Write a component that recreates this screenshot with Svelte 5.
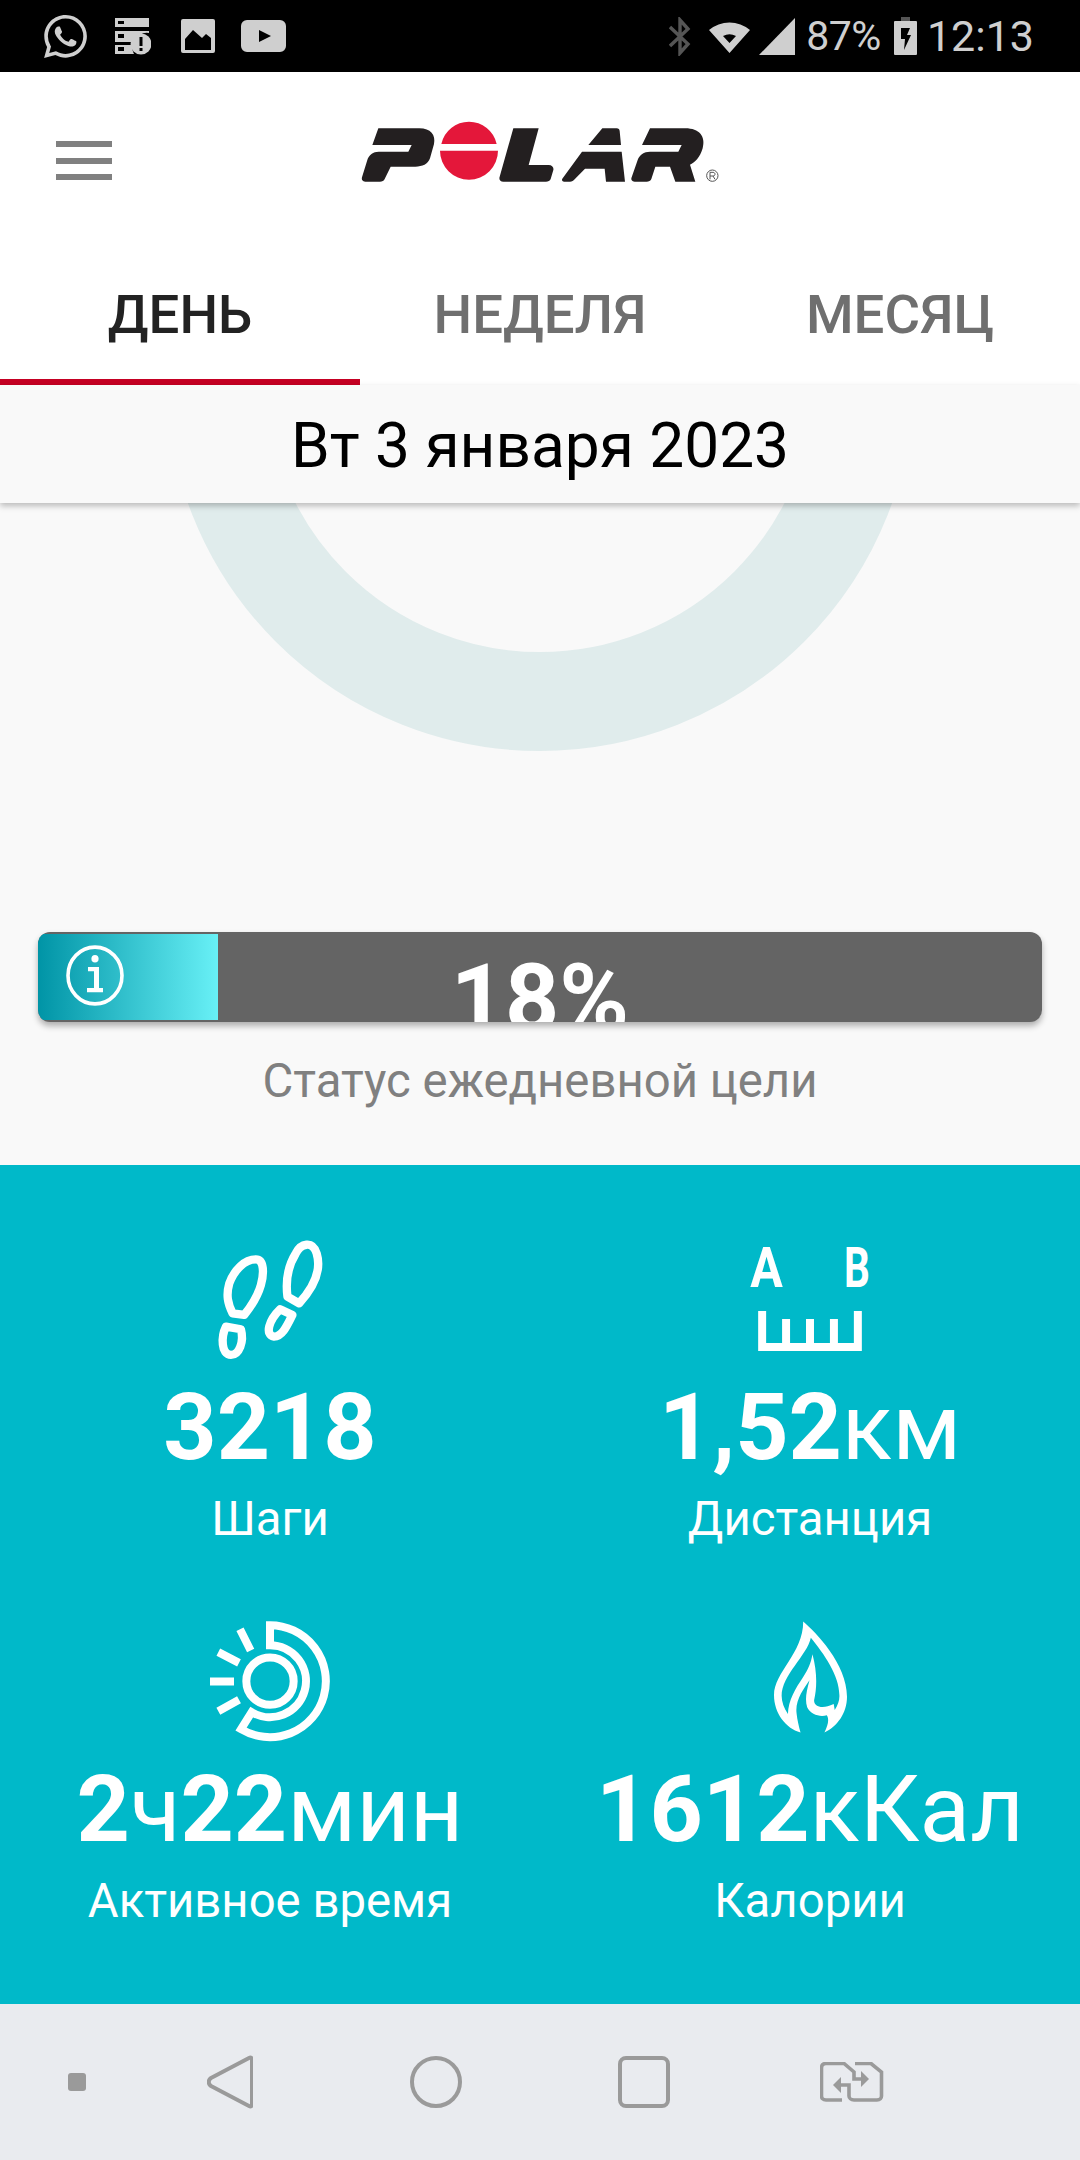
<script>
  let tabs = ['ДЕНЬ', 'НЕДЕЛЯ', 'МЕСЯЦ'];
  let active = 0;
  let percent = 18;
</script>

<div class="screen">
  <div class="status">
    <div class="status-left">
      <svg class="wa" viewBox="2 2 20 20"><path fill="#cfcfcf" d="M12.04 2c-5.46 0-9.91 4.45-9.91 9.91 0 1.75.46 3.45 1.32 4.95L2.05 22l5.25-1.38c1.45.79 3.08 1.21 4.74 1.21 5.46 0 9.91-4.45 9.91-9.91 0-2.65-1.03-5.14-2.9-7.01A9.816 9.816 0 0 0 12.04 2m.01 1.67c2.2 0 4.26.86 5.82 2.42a8.225 8.225 0 0 1 2.41 5.83c0 4.54-3.7 8.23-8.24 8.23-1.48 0-2.93-.39-4.19-1.15l-.3-.17-3.12.82.83-3.04-.2-.32a8.188 8.188 0 0 1-1.26-4.38c.01-4.54 3.7-8.24 8.25-8.24M8.53 7.33c-.16 0-.43.06-.66.31-.22.25-.87.86-.87 2.07 0 1.22.89 2.39 1 2.56.14.17 1.76 2.67 4.25 3.73.59.27 1.05.42 1.41.53.59.19 1.13.16 1.56.1.48-.07 1.46-.6 1.67-1.18.21-.58.21-1.07.15-1.18-.07-.1-.23-.16-.48-.27-.25-.14-1.47-.74-1.69-.82-.23-.08-.37-.12-.56.12-.16.25-.64.81-.78.97-.15.17-.29.19-.53.07-.26-.13-1.06-.39-2-1.23-.74-.66-1.23-1.47-1.38-1.72-.12-.24-.01-.39.11-.5.11-.11.27-.29.37-.44.13-.14.17-.25.25-.41.08-.17.04-.31-.02-.43-.06-.11-.56-1.35-.77-1.84-.2-.48-.4-.42-.56-.43-.14 0-.3-.01-.47-.01z"/></svg>
      <svg class="srv" viewBox="0 0 36 37">
        <path fill="#cfcfcf" fill-rule="evenodd" d="M0 0H34V9H0ZM3 3V6H9V3ZM0 13H34V15A12 12 0 0 0 20 24H0ZM3 16V20H9V16ZM0 27H18A12 12 0 0 0 19 36H0ZM3 29V33H9V29Z"/>
        <circle cx="26" cy="26" r="10.5" fill="#cfcfcf"/>
        <rect x="24.5" y="19" width="3" height="9" fill="#000"/>
        <rect x="24.5" y="30" width="3" height="3" fill="#000"/>
      </svg>
      <svg class="pic" viewBox="0 0 34 34">
        <path fill="#cfcfcf" fill-rule="evenodd" d="M2 0H32A2 2 0 0 1 34 2V32A2 2 0 0 1 32 34H2A2 2 0 0 1 0 32V2A2 2 0 0 1 2 0ZM4 31H30V19L25 15 21 19 12 11 4 20Z"/>
      </svg>
      <svg class="yt" viewBox="0 0 45 32">
        <path fill="#cfcfcf" fill-rule="evenodd" d="M6 0H39A6 6 0 0 1 45 6V26A6 6 0 0 1 39 32H6A6 6 0 0 1 0 26V6A6 6 0 0 1 6 0ZM18 10V22L30 16Z"/>
      </svg>
    </div>
    <div class="status-right">
      <svg class="bt" viewBox="0 0 22 39"><path fill="none" stroke="#555" stroke-width="3.4" d="M1 10 19 27 11 36V3L19 12 1 29"/></svg>
      <svg class="wifi" viewBox="0 0 41 33">
        <path fill="#cfcfcf" fill-rule="evenodd" d="M0 10A32 32 0 0 1 41 10L20.5 33ZM14 16 20.5 23 27 16A14 14 0 0 0 14 16Z"/>
      </svg>
      <svg class="signal" viewBox="0 0 36 37"><path fill="#cfcfcf" d="M36 0V37H0Z"/></svg>
      <span class="st-text pct">87%</span>
      <svg class="batt" viewBox="0 0 23 38">
        <path fill="#555" d="M7 0H16V4H7Z"/>
        <path fill="#cfcfcf" fill-rule="evenodd" d="M1 4H22A1 1 0 0 1 23 5V37A1 1 0 0 1 22 38H1A1 1 0 0 1 0 37V5A1 1 0 0 1 1 4ZM7 11H16L13 18H17L10 33 11 22H7Z"/>
      </svg>
      <span class="st-text clock">12:13</span>
    </div>
  </div>

  <header class="topbar">
    <div class="burger"><span></span><span></span><span></span></div>
    <svg class="logo" viewBox="0 0 1200 270">
      <path fill="#231f20" d="M115 55H238C272 55 288 75 282 102L270 145C264 163 247 170 226 170H152L134 207C132 213 126 215 120 215H76C68 215 64 209 66 202L82 150C86 135 100 125 116 125H205L215 105H97Z"/>
      <path fill="#e4173a" d="M304 102A85 85 0 0 1 470 102ZM300 122H474A87 87 0 1 1 300 122Z"/>
      <path fill="#231f20" d="M520 55H596L566 165H626C636 165 642 172 640 180L632 207C630 213 624 215 618 215H490C481 215 476 208 479 200Z"/>
      <path fill="#231f20" d="M787 55H830C836 55 838 58 839 63L843 105H745ZM726 125H845L855 215H798L794 176H735L704 208C700 213 696 215 690 215H672C666 215 664 209 668 205Z"/>
      <path fill="#231f20" d="M930 55H1036C1078 55 1098 80 1088 115C1080 143 1064 158 1050 164L1066 215H1006L990 170H946L934 207C932 213 926 215 920 215H884C876 215 872 209 875 202L893 150C898 135 912 125 930 125H1015L1025 105H906Z"/>
      <circle cx="1117" cy="197" r="17" fill="none" stroke="#555" stroke-width="3"/>
      <path fill="none" stroke="#555" stroke-width="3" d="M1110 208V187H1119C1127 187 1127 198 1119 198H1110M1119 198 1125 208"/>
    </svg>
  </header>

  <nav class="tabs">
    {#each tabs as t, i}
      <div class="tab" class:active={i === active}>{t}</div>
    {/each}
  </nav>

  <div class="date">Вт 3 января 2023</div>

  <section class="goal">
    <div class="ring-wrap">
      <svg class="ring" viewBox="0 0 1080 248">
        <circle cx="540" cy="-126" r="324.5" fill="none" stroke="#e0ecec" stroke-width="99"/>
      </svg>
    </div>
    <div class="bar">
      <div class="bar-fill" style="width: {percent * 0.995}%">
        <svg class="info" viewBox="0 0 58 58" preserveAspectRatio="none">
          <circle cx="29" cy="29" r="27" fill="none" stroke="#fff" stroke-width="3.6"/>
          <circle cx="29" cy="13" r="3.6" fill="#fff"/>
          <path fill="#fff" d="M22 21H33V41H37V45H21V41H28V25H22Z"/>
        </svg>
      </div>
      <div class="bar-value">{percent}%</div>
    </div>
    <div class="goal-label">Статус ежедневной цели</div>
  </section>

  <section class="stats">
    <div class="stat">
      <div class="icon">
        <svg class="i-steps" viewBox="108 84 322 366">
          <g fill="none" stroke="#fff" stroke-width="25" stroke-linejoin="round">
            <path d="M155 310C140 280 135 255 145 220 160 180 190 148 225 148 250 148 250 190 240 225 230 260 210 290 190 315Z"/>
            <path d="M135 350 180 358C190 395 175 435 150 435 120 435 120 380 135 350Z"/>
            <path d="M320 260C315 220 320 170 345 130 360 100 395 90 408 130 420 170 410 220 355 280Z"/>
            <path d="M298 298 335 315C320 345 305 380 280 380 250 375 265 330 298 298Z"/>
          </g>
        </svg>
      </div>
      <div class="value">3218</div>
      <div class="label">Шаги</div>
    </div>
    <div class="stat">
      <div class="icon">
        <svg class="i-dist" viewBox="90 70 360 322">
          <text x="90" y="200" class="ab" textLength="98" lengthAdjust="spacingAndGlyphs">A</text>
          <text x="372" y="200" class="ab" textLength="78" lengthAdjust="spacingAndGlyphs">B</text>
          <path fill="none" stroke="#fff" stroke-width="24" d="M126 272V380H414V272M198 296V380M270 296V380M342 296V380"/>
        </svg>
      </div>
      <div class="value">1,52<span class="unit">км</span></div>
      <div class="label">Дистанция</div>
    </div>
    <div class="stat">
      <div class="icon">
        <svg class="i-active" viewBox="90 62 360 362">
          <g fill="none" stroke="#fff" stroke-width="24">
            <circle cx="270" cy="242" r="71"/>
            <path d="M270 74A168 168 0 1 1 183 386L215 335A108 108 0 1 0 270 134Z"/>
            <path d="M90 243H162M115 155 177 187M180 86 212 150M115 332 177 298"/>
          </g>
        </svg>
      </div>
      <div class="value">2<span class="unit">ч</span>22<span class="unit">мин</span></div>
      <div class="label">Активное время</div>
    </div>
    <div class="stat">
      <div class="icon">
        <svg class="i-flame" viewBox="125 63 220 335">
          <path fill="#fff" fill-rule="evenodd" d="M213 63C250 95 345 190 345 290 345 340 315 380 277 398 288 375 292 358 284 346 265 352 235 345 225 322 218 300 222 275 232 240 215 265 188 300 193 340 195 360 200 380 205 398 160 385 125 340 125 285 125 215 213 160 213 63ZM236 112C225 165 148 225 148 287 148 305 155 325 167 342 168 300 190 265 212 232 228 208 236 190 241 162 255 215 255 260 246 300 244 318 268 330 305 312L308 330C318 315 323 300 322 285 322 225 275 160 236 112Z"/>
        </svg>
      </div>
      <div class="value">1612<span class="unit">кКал</span></div>
      <div class="label">Калории</div>
    </div>
  </section>

  <footer class="navbar">
    <span class="dot"></span>
    <svg class="n-back" viewBox="0 0 46 54"><path fill="none" stroke="#9a9a9a" stroke-width="4" stroke-linejoin="round" d="M42 3C44 2 45 3 45 5V49C45 51 44 52 42 51L4 31C1 29 1 25 4 23Z"/></svg>
    <svg class="n-home" viewBox="0 0 52 52"><circle cx="26" cy="26" r="24" fill="none" stroke="#9a9a9a" stroke-width="4"/></svg>
    <svg class="n-recent" viewBox="0 0 52 52"><rect x="2" y="2" width="48" height="48" rx="6" fill="none" stroke="#9a9a9a" stroke-width="4"/></svg>
    <svg class="n-swap" viewBox="0 0 64 40">
      <g fill="none" stroke="#9a9a9a" stroke-width="3.6">
        <path d="M22 38H6C3 38 1.500 36 1.500 34V6C1.500 3 3 1.500 6 1.500H24L34 10V17H44"/>
        <path d="M35 1.500H51L61.500 10V34C61.500 36 60 38 57 38H34C31 38 29 36 29 34V23H18"/>
      </g>
      <path fill="#9a9a9a" d="M41 9 49 17 41 25ZM21 15 13 23 21 31Z"/>
    </svg>
  </footer>
</div>

<style>
  :global(body) {
    margin: 0;
    background: #000;
  }
  .screen {
    width: 1080px;
    height: 2160px;
    display: flex;
    flex-direction: column;
    overflow: hidden;
    font-family: Roboto, "Noto Sans", sans-serif;
    background: #fff;
  }
  svg { display: block; }

  .status {
    height: 72px;
    flex: none;
    background: #000;
    display: flex;
    align-items: center;
    justify-content: space-between;
    padding: 0 46px 0 44px;
    box-sizing: border-box;
  }
  .status-left, .status-right { display: flex; align-items: center; }
  .wa { width: 43px; height: 43px; margin-right: 28px; }
  .srv { width: 36px; height: 37px; margin-right: 30px; }
  .pic { width: 34px; height: 34px; margin-right: 26px; }
  .yt { width: 45px; height: 32px; }
  .bt { width: 22px; height: 39px; margin-right: 18px; }
  .wifi { width: 41px; height: 33px; margin-right: 9px; }
  .signal { width: 36px; height: 37px; margin-right: 11px; }
  .st-text { color: #cfcfcf; font-size: 41px; line-height: 72px; }
  .clock { font-size: 43px; }
  .pct { margin-right: 13px; letter-spacing: -0.5px; }
  .batt { width: 23px; height: 38px; margin-right: 10px; }

  .topbar {
    flex: none;
    height: 168px;
    display: grid;
    grid-template-columns: 1fr 400px 1fr;
    padding-top: 38px;
    box-sizing: border-box;
  }
  .burger {
    margin: 31px 0 0 56px;
    width: 56px;
    display: flex;
    flex-direction: column;
    gap: 10.5px;
  }
  .burger span { display: block; height: 6px; background: #808080; }
  .logo { width: 400px; height: 90px; grid-column: 2; }

  .tabs {
    flex: none;
    height: 145px;
    display: grid;
    grid-template-columns: repeat(3, 1fr);
    background: #fff;
  }
  .tab {
    display: flex;
    justify-content: center;
    align-items: center;
    padding-top: 8px;
    font-size: 54.5px;
    font-weight: 500;
    color: #6f6f6f;
    border-bottom: 6px solid transparent;
    box-sizing: border-box;
  }
  .tab.active { color: #222; border-bottom-color: #c50023; }

  .date {
    flex: none;
    height: 118px;
    background: #f9f9f9;
    color: #000;
    font-size: 62.2px;
    line-height: 122px;
    text-align: center;
    box-shadow: 0 3px 6px rgba(0, 0, 0, 0.25);
    position: relative;
    z-index: 1;
  }

  .goal {
    flex: none;
    height: 662px;
    background: #f9f9f9;
    display: flex;
    flex-direction: column;
    box-sizing: border-box;
  }
  .ring-wrap { height: 429px; flex: none; }
  .ring { width: 1080px; height: 248px; }
  .bar {
    margin: 0 38px;
    height: 90px;
    flex: none;
    background: #646464;
    border-radius: 12px;
    overflow: hidden;
    position: relative;
    box-shadow: 0 4px 6px rgba(0, 0, 0, 0.3);
  }
  .bar-fill {
    position: absolute;
    left: 0;
    top: 2px;
    bottom: 2px;
    background: linear-gradient(90deg, #0094a6, #68f0f6);
    padding-left: 28px;
    box-sizing: border-box;
  }
  .info { width: 58px; height: 61px; margin-top: 11px; }
  .bar-value {
    color: #fff;
    font-size: 94.5px;
    font-weight: 700;
    text-align: center;
    line-height: 94px;
    padding-top: 20px;
  }
  .goal-label {
    margin-top: 32px;
    text-align: center;
    color: #808080;
    font-size: 47.3px;
    line-height: 54px;
  }

  .stats {
    flex: 1;
    background: #00b9c9;
    color: #fff;
    display: grid;
    grid-template-columns: 1fr 1fr;
    grid-auto-rows: 382px;
    padding-top: 73px;
    box-sizing: border-box;
    text-align: center;
  }
  .icon {
    height: 122px;
    display: flex;
    justify-content: center;
    align-items: center;
  }
  .i-steps { height: 122px; width: 107px; }
  .i-dist { height: 107px; width: 120px; margin-top: -3px; overflow: visible; }
  .i-active { height: 121px; width: 120px; }
  .i-flame { height: 112px; width: 73px; margin-bottom: 8px; }
  .ab {
    fill: #fff;
    font-family: Roboto, sans-serif;
    font-weight: 700;
    font-size: 168px;
  }
  .value {
    font-size: 93px;
    font-weight: 700;
    line-height: 106px;
    margin-top: 15px;
  }
  .unit { font-weight: 400; }
  .label {
    font-size: 47.3px;
    line-height: 54px;
    margin-top: 11px;
  }

  .navbar {
    flex: none;
    height: 156px;
    background: #e9ebef;
    display: flex;
    align-items: center;
    padding-left: 68px;
    box-sizing: border-box;
  }
  .dot { width: 18px; height: 18px; background: #9a9a9a; border-radius: 3px; margin-right: 121px; }
  .n-back { width: 46px; height: 54px; margin-right: 157px; }
  .n-home { width: 52px; height: 52px; margin-right: 156px; }
  .n-recent { width: 52px; height: 52px; margin-right: 150px; }
  .n-swap { width: 64px; height: 40px; }
</style>
